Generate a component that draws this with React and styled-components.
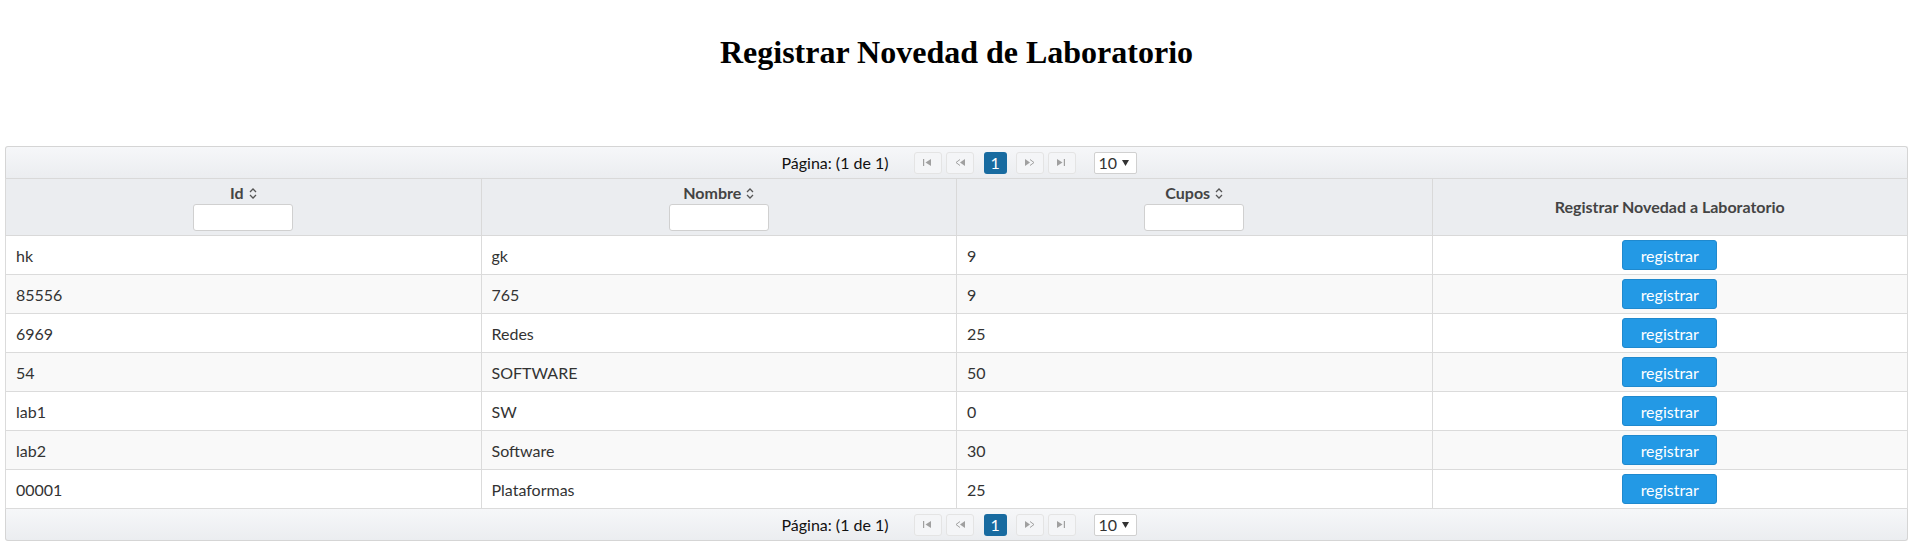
import React from "react";
import styled, { createGlobalStyle } from "styled-components";

const labs = [
  { id: "hk", nombre: "gk", cupos: 9 },
  { id: "85556", nombre: "765", cupos: 9 },
  { id: "6969", nombre: "Redes", cupos: 25 },
  { id: "54", nombre: "SOFTWARE", cupos: 50 },
  { id: "lab1", nombre: "SW", cupos: 0 },
  { id: "lab2", nombre: "Software", cupos: 30 },
  { id: "00001", nombre: "Plataformas", cupos: 25 },
];

const Global = createGlobalStyle`
  body {
    margin: 0;
    background: #ffffff;
    font-family: Lato, "Open Sans", sans-serif;
    color: #333333;
  }
`;

const SortIcon = () => (
  <svg width="8" height="11" viewBox="0 0 8 11">
    <path d="M1 4 L4 1 L7 4" fill="none" stroke="#555" strokeWidth="1.3" />
    <path d="M1 7 L4 10 L7 7" fill="none" stroke="#555" strokeWidth="1.3" />
  </svg>
);

const NavIcon = ({ kind }) => {
  const shapes = {
    first: (
      <>
        <rect x="0" y="0" width="1.2" height="7" />
        <path d="M8 0 L2.5 3.5 L8 7 Z" />
      </>
    ),
    prev: (
      <>
        <path d="M5 0.5 L1 3.5 L5 6.5" fill="none" stroke="#a0a0a0" strokeWidth="1" />
        <path d="M10 0 L5 3.5 L10 7 Z" />
      </>
    ),
    next: (
      <>
        <path d="M0 0 L5 3.5 L0 7 Z" />
        <path d="M5 0.5 L9 3.5 L5 6.5" fill="none" stroke="#a0a0a0" strokeWidth="1" />
      </>
    ),
    last: (
      <>
        <path d="M0 0 L5.5 3.5 L0 7 Z" />
        <rect x="6.8" y="0" width="1.2" height="7" />
      </>
    ),
  };
  return (
    <svg width="10" height="7" viewBox="0 0 10 7" fill="#a0a0a0">
      {shapes[kind]}
    </svg>
  );
};

const Paginator = ({ position }) => (
  <PagBar position={position}>
    <PageReport>Página: (1 de 1)</PageReport>
    <NavGroup side="left">
      <NavButton><NavIcon kind="first" /></NavButton>
      <NavButton><NavIcon kind="prev" /></NavButton>
    </NavGroup>
    <PageButton>1</PageButton>
    <NavGroup side="right">
      <NavButton><NavIcon kind="next" /></NavButton>
      <NavButton><NavIcon kind="last" /></NavButton>
    </NavGroup>
    <RowsSelect>
      10
      <svg width="7" height="6" viewBox="0 0 7 6">
        <path d="M0 0 L7 0 L3.5 6 Z" fill="#333" />
      </svg>
    </RowsSelect>
  </PagBar>
);

const FilterHeader = ({ label }) => (
  <HeadCell>
    <HeadLabel>
      {label} <SortIcon />
    </HeadLabel>
    <Filter type="text" />
  </HeadCell>
);

export default function App() {
  return (
    <Page>
      <Global />
      <Title>Registrar Novedad de Laboratorio</Title>
      <DataTable>
        <Paginator position="top" />
        <Table>
          <thead>
            <tr>
              <FilterHeader label="Id" />
              <FilterHeader label="Nombre" />
              <FilterHeader label="Cupos" />
              <HeadCell>
                <HeadLabel>Registrar Novedad a Laboratorio</HeadLabel>
              </HeadCell>
            </tr>
          </thead>
          <tbody>
            {labs.map((lab, i) => (
              <Row key={lab.id} odd={i % 2 === 1}>
                <Cell>{lab.id}</Cell>
                <Cell>{lab.nombre}</Cell>
                <Cell>{lab.cupos}</Cell>
                <ActionCell>
                  <RegisterButton>registrar</RegisterButton>
                </ActionCell>
              </Row>
            ))}
          </tbody>
        </Table>
        <Paginator position="bottom" />
      </DataTable>
    </Page>
  );
}

const Page = styled.div`
  padding: 0 9px 0 5px;
`;

const Title = styled.h1`
  margin: 0;
  padding: 34px 0 0;
  height: 37px;
  margin-bottom: 75px;
  text-align: center;
  font-family: "Liberation Serif", "Times New Roman", serif;
  font-size: 32px;
  font-weight: bold;
  line-height: 37px;
  color: #000;
`;

const DataTable = styled.div`
  width: 100%;
`;

const PagBar = styled.div`
  display: flex;
  align-items: center;
  justify-content: center;
  height: 32px;
  border: 1px solid #d5d5d5;
  border-bottom: ${(p) => (p.position === "top" ? "0" : "1px solid #d5d5d5")};
  border-top: ${(p) => (p.position === "top" ? "1px solid #d5d5d5" : "0")};
  border-radius: ${(p) => (p.position === "top" ? "3px 3px 0 0" : "0 0 3px 3px")};
  background: linear-gradient(to bottom, #f6f7f9 0%, #ebedf0 100%);
  font-size: 16px;
  box-sizing: border-box;
  padding-left: 5px;
`;

const PageReport = styled.span`
  font-weight: 400;
  color: #111;
  margin-right: 25px;
`;

const NavGroup = styled.span`
  display: flex;
  gap: 4px;
  margin: ${(p) => (p.side === "left" ? "0 10px 0 0" : "0 18px 0 9px")};
`;

const NavButton = styled.span`
  display: flex;
  align-items: center;
  justify-content: center;
  width: 28px;
  height: 22px;
  box-sizing: border-box;
  border: 1px solid #e4e4e4;
  border-radius: 3px;
  background: #f4f5f7;
`;

const PageButton = styled.span`
  display: flex;
  align-items: center;
  justify-content: center;
  width: 23px;
  height: 22px;
  border-radius: 3px;
  background: #186ba0;
  color: #fff;
  font-size: 16px;
`;

const RowsSelect = styled.span`
  display: flex;
  align-items: center;
  gap: 5px;
  width: 43px;
  height: 22px;
  box-sizing: border-box;
  padding-left: 4px;
  border: 1px solid #d0d0d0;
  border-radius: 2px;
  background: #fff;
  color: #333;
  font-size: 16px;
`;

const Table = styled.table`
  width: 100%;
  table-layout: fixed;
  border-collapse: collapse;
`;

const HeadCell = styled.th`
  height: 55px;
  box-sizing: border-box;
  padding: 4px 10px 4px;
  border: 1px solid #d9d9d9;
  background: #ebedf0;
  color: #444;
  font-size: 16px;
  font-weight: 700;
  text-align: center;
  vertical-align: middle;
`;

const HeadLabel = styled.div`
  display: flex;
  align-items: center;
  justify-content: center;
  gap: 5px;
  line-height: 20px;
`;

const Filter = styled.input`
  display: block;
  margin: 1px auto 0;
  width: 100px;
  height: 27px;
  box-sizing: border-box;
  border: 1px solid #d0d0d0;
  border-radius: 3px;
  background: #fff;
`;

const Row = styled.tr`
  background: ${(p) => (p.odd ? "#f9f9f9" : "#ffffff")};
`;

const Cell = styled.td`
  height: 37.6px;
  box-sizing: border-box;
  padding: 4px 10px;
  border: 1px solid #dbdbdb;
  font-size: 16px;
  color: #333;
`;

const ActionCell = styled(Cell)`
  text-align: center;
`;

const RegisterButton = styled.button`
  width: 95px;
  height: 30px;
  border: 1px solid #1f89ce;
  border-radius: 3px;
  background: #2399e5;
  color: #fff;
  font-family: Lato, sans-serif;
  font-size: 16px;
  cursor: pointer;
  vertical-align: middle;
`;
